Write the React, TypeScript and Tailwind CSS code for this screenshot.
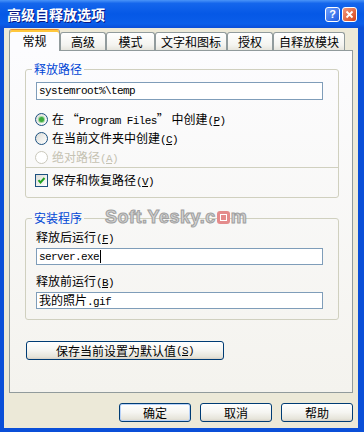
import type { ReactNode } from "react";

const tabs = [
  { label: "常规", width: "w-[51px]", active: true },
  { label: "高级", width: "w-[46px]" },
  { label: "模式", width: "w-[49px]" },
  { label: "文字和图标", width: "w-[72px]" },
  { label: "授权", width: "w-[46px]" },
  { label: "自释放模块", width: "w-[72px]" },
];

// half-width ascii, SimSun-ish 6px advance
const A = ({ children }: { children: ReactNode }) => (
  <span className="font-['Liberation_Mono',monospace] text-[11px] tracking-[-0.6px]">{children}</span>
);

const Key = ({ k }: { k: string }) => (
  <A>
    (<span className="underline">{k}</span>)
  </A>
);

const Radio = ({ checked, disabled }: { checked?: boolean; disabled?: boolean }) => (
  <span
    className={`flex h-[13px] w-[13px] shrink-0 items-center justify-center rounded-full border ${
      disabled ? "border-[#CAC8BB] bg-white" : "border-[#1C5180] bg-[linear-gradient(135deg,#DCDCD7,#FFFFFF)]"
    }`}
  >
    {checked && <span className="h-[5px] w-[5px] rounded-full bg-[#3DAA3D] shadow-[0_0_0_1px_#9ED69E]" />}
  </span>
);

const Checkbox = () => (
  <span className="flex h-[13px] w-[13px] shrink-0 items-center justify-center border border-[#1C5180] bg-[linear-gradient(135deg,#DCDCD7,#FFFFFF)]">
    <svg width="9" height="9" viewBox="0 0 9 9">
      <polyline points="1.5,4.2 3.5,6.5 7.5,2" fill="none" stroke="#21A121" strokeWidth="2" />
    </svg>
  </span>
);

const TextBox = ({ children, className }: { children: ReactNode; className?: string }) => (
  <div className={`flex w-[287px] items-center border border-[#7F9DB9] bg-white pl-[2px] leading-[14px] ${className}`}>
    {children}
  </div>
);

const XpButton = ({ children, className, isDefault }: { children: ReactNode; className?: string; isDefault?: boolean }) => (
  <button
    className={`flex h-[19px] items-center justify-center rounded-[3px] border border-[#003C74] bg-[linear-gradient(180deg,#FFFFFF,#F5F5F1_50%,#E6E4DA_88%,#D6D0C5)] leading-[14px] ${
      isDefault ? "shadow-[inset_0_0_0_1px_#B8D2F8]" : ""
    } ${className}`}
  >
    {children}
  </button>
);

const TitleBar = () => (
  <div className="flex h-[28px] items-center justify-between bg-[linear-gradient(180deg,#4A94F8_0%,#1466EC_12%,#0558E6_50%,#0A5EEA_85%,#0A4ED8_100%)] pl-[7px] pr-[7px]">
    <span className="text-[14px] font-bold leading-[16px] text-white [text-shadow:1px_1px_0_#0A1883]">高级自释放选项</span>
    <div className="flex gap-[2px]">
      <span className="flex h-[15px] w-[15px] items-center justify-center rounded-[3px] border border-white bg-[linear-gradient(135deg,#6FA0FF,#1F5BE0)] font-['Liberation_Sans',sans-serif] text-[11px] font-bold leading-none text-white">
        ?
      </span>
      <span className="flex h-[15px] w-[15px] items-center justify-center rounded-[3px] border border-white bg-[linear-gradient(135deg,#F29A7E,#D84418)]">
        <svg width="9" height="9" viewBox="0 0 9 9">
          <path d="M1.5 1.5 L7.5 7.5 M7.5 1.5 L1.5 7.5" stroke="white" strokeWidth="1.8" />
        </svg>
      </span>
    </div>
  </div>
);

export default function App() {
  return (
    <div className="flex h-[432px] w-[364px] flex-col bg-[#0A4FD8] font-['Noto_Sans_CJK_SC',sans-serif] text-[12px] text-black">
      <TitleBar />

      <div className="mb-[4px] ml-[4px] mr-[6px] flex flex-1 flex-col bg-[#ECE9D8] px-[5px] pt-[1px]">
        {/* tabs */}
        <div className="flex h-[21px] items-end">
          {tabs.map((t) =>
            t.active ? (
              <div
                key={t.label}
                className={`relative z-10 -mb-px flex h-[22px] items-center justify-center rounded-t-[3px] border border-b-0 border-[#919B9C] border-t-[#E68B2C] bg-[#FCFCFE] leading-[14px] shadow-[inset_0_2px_0_#FFC73C] ${t.width}`}
              >
                {t.label}
              </div>
            ) : (
              <div
                key={t.label}
                className={`flex h-[18px] items-center justify-center rounded-t-[3px] border border-b-0 border-[#919B9C] bg-[linear-gradient(180deg,#FFFFFF,#F4F4F0_70%,#E6E5DD)] leading-[14px] ${t.width}`}
              >
                {t.label}
              </div>
            )
          )}
        </div>

        {/* tab page */}
        <div className="relative h-[343px] border border-[#919B9C] bg-[linear-gradient(180deg,#FCFCFE,#F4F3EE)] px-[15px]">
          <fieldset className="mt-[11px] w-[314px] rounded-[3px] border border-[#D0D0BF]">
            <legend className="ml-[6px] px-[2px] leading-[14px] text-[#0046D5]">释放路径</legend>
            <TextBox className="ml-[10px] mt-[6px] h-[18px]">
              <A>systemroot%\temp</A>
            </TextBox>
            <div className="mt-[10px] flex flex-col leading-[14px]">
              <label className="flex h-[19px] items-center gap-[4px] pl-[9px]">
                <Radio checked />
                <span>
                  在 “<A>Program Files</A>” 中创建<Key k="P" />
                </span>
              </label>
              <label className="flex h-[19px] items-center gap-[4px] pl-[9px]">
                <Radio />
                <span>
                  在当前文件夹中创建<Key k="C" />
                </span>
              </label>
              <label className="flex h-[19px] items-center gap-[4px] pl-[9px] text-[#C5C2B2]">
                <Radio disabled />
                <span>
                  绝对路径<Key k="A" />
                </span>
              </label>
            </div>
            <div className="border-t border-[#D0D0BF] pb-[7px] pl-[9px] pt-[3px] leading-[14px]">
              <label className="flex h-[19px] items-center gap-[4px]">
                <Checkbox />
                <span>
                  保存和恢复路径<Key k="V" />
                </span>
              </label>
            </div>
          </fieldset>

          <fieldset className="mt-[13px] w-[314px] rounded-[3px] border border-[#D0D0BF] pb-[10px]">
            <legend className="ml-[6px] px-[2px] leading-[14px] text-[#0046D5]">安装程序</legend>
            <div className="ml-[10px] mt-[5px] leading-[14px]">
              释放后运行<Key k="F" />
            </div>
            <TextBox className="ml-[10px] mt-[2px] h-[17px]">
              <A>server.exe</A>
              <span className="ml-px h-[13px] w-px bg-black" />
            </TextBox>
            <div className="ml-[10px] mt-[9px] leading-[14px]">
              释放前运行<Key k="B" />
            </div>
            <TextBox className="ml-[10px] mt-[2px] h-[17px]">
              <span>
                我的照片<A>.gif</A>
              </span>
            </TextBox>
          </fieldset>

          <XpButton className="ml-px mt-[21px] w-[198px]">
            保存当前设置为默认值<Key k="S" />
          </XpButton>

          {/* site watermark baked into the screenshot */}
          <div className="pointer-events-none absolute left-[95px] top-[158px] flex items-center font-['Liberation_Sans',sans-serif] text-[18px] font-bold leading-[16px] tracking-[0.5px] text-[#D4D4D4] [-webkit-text-stroke:1px_#A0A0A0]">
            Soft.Yesky.c
            <span className="mx-px flex h-[13px] w-[13px] items-center justify-center rounded-[3px] bg-[#E48B8B]">
              <span className="h-[7px] w-[7px] border border-white" />
            </span>
            m
          </div>
        </div>

        {/* dialog buttons */}
        <div className="mt-[10px] flex justify-end gap-[9px]">
          <XpButton className="w-[72px]" isDefault>
            确定
          </XpButton>
          <XpButton className="w-[72px]">取消</XpButton>
          <XpButton className="w-[72px]">帮助</XpButton>
        </div>
      </div>
    </div>
  );
}
